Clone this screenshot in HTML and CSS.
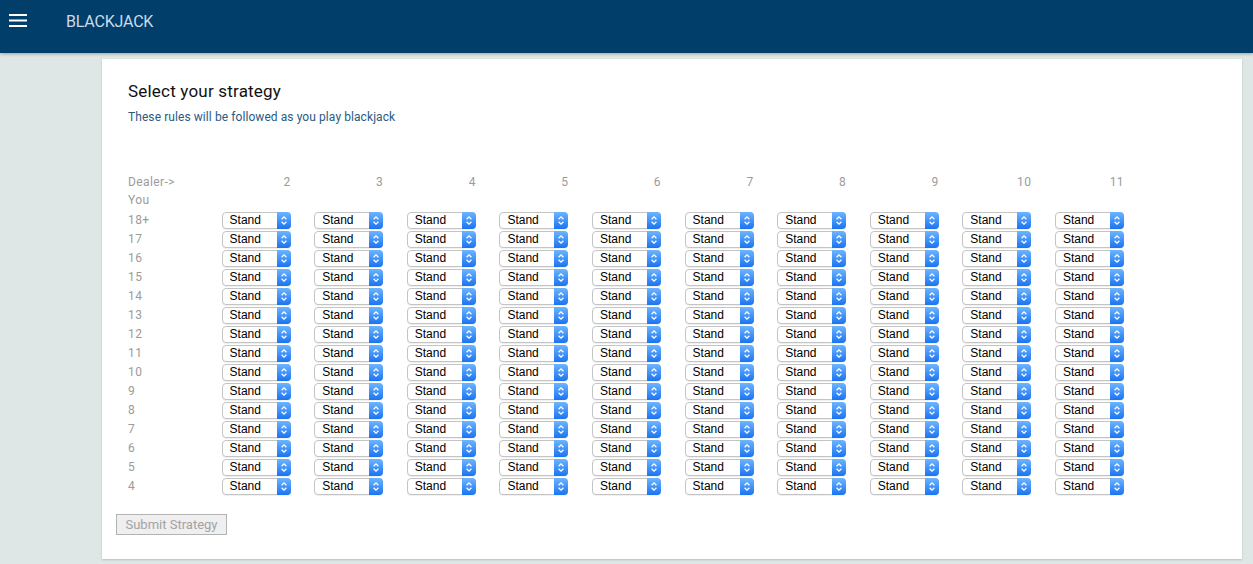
FILE: index.html
```html
<!DOCTYPE html>
<html lang="en">
<head>
<meta charset="utf-8">
<title>Blackjack</title>
<link rel="stylesheet" href="styles.css">
</head>
<body>
<header class="topbar">
  <button class="menu" aria-label="Menu">
    <svg width="18" height="14" viewBox="0 0 18 14"><rect x="0" y="0" width="18" height="2" fill="#fff"/><rect x="0" y="5.5" width="18" height="2" fill="#fff"/><rect x="0" y="11" width="18" height="2" fill="#fff"/></svg>
  </button>
  <span class="brand">BLACKJACK</span>
</header>
<main class="page">
  <section class="card">
    <h1 class="title">Select your strategy</h1>
    <p class="subtitle">These rules will be followed as you play blackjack</p>
    <div class="grid" id="grid">
      <div class="lbl">Dealer-&gt;</div>
    </div>
    <button class="submit" disabled>Submit Strategy</button>
  </section>
</main>
<script src="script.js"></script>
</body>
</html>
```

FILE: script.js
```js
(function () {
  var grid = document.getElementById('grid');
  var dealer = [2, 3, 4, 5, 6, 7, 8, 9, 10, 11];
  var html = '';
  dealer.forEach(function (d) { html += '<div class="num">' + d + '</div>'; });
  html += '<div class="lbl you">You</div>';
  var rows = ['18+', '17', '16', '15', '14', '13', '12', '11', '10', '9', '8', '7', '6', '5', '4'];
  var arrow = '<span class="arr"><svg width="14" height="17" viewBox="0 0 14 17"><path d="M4.6 7.2 L7 4.8 L9.4 7.2" fill="none" stroke="#fff" stroke-width="1.3"/><path d="M4.6 9.8 L7 12.2 L9.4 9.8" fill="none" stroke="#fff" stroke-width="1.3"/></svg></span>';
  rows.forEach(function (r) {
    html += '<div class="lbl row">' + r + '</div>';
    dealer.forEach(function () {
      html += '<div class="cell"><span class="sel"><select><option>Stand</option><option>Hit</option><option>Double</option></select>' + arrow + '</span></div>';
    });
  });
  grid.insertAdjacentHTML('beforeend', html);
})();
```

FILE: styles.css
```css
html, body {
  margin: 0;
  padding: 0;
}
body {
  background: #dfe6e6;
  font-family: Roboto, "Liberation Sans", sans-serif;
  height: 564px;
  overflow: hidden;
}
.topbar {
  height: 53px;
  background: #013e6a;
  display: flex;
  align-items: center;
  box-shadow: 0 1px 3px rgba(0, 0, 0, 0.3);
  position: relative;
  z-index: 1;
}
.menu {
  border: 0;
  background: none;
  padding: 0;
  margin: 0 0 11px 9px;
  width: 18px;
  height: 14px;
  display: flex;
}
.brand {
  margin: 0 0 11px 39px;
  color: #cbdbea;
  font-size: 16px;
  letter-spacing: -0.2px;
}
.page {
  padding: 6px 11px 0 102px;
}
.card {
  background: #fff;
  height: 500px;
  box-sizing: border-box;
  padding: 22px 14px 0 14px;
  box-shadow: 0 1px 2px rgba(0, 0, 0, 0.18);
}
.title {
  margin: 0 0 0 12px;
  font-size: 17px;
  line-height: 20px;
  font-weight: 400;
  color: #111;
  letter-spacing: 0.2px;
}
.subtitle {
  margin: 8px 0 0 12px;
  font-size: 12px;
  line-height: 16px;
  color: #2b5b82;
  letter-spacing: 0.08px;
}
.grid {
  margin: 48px 0 0 12px;
  display: grid;
  grid-template-columns: 70px repeat(10, 92.6px);
  grid-auto-rows: 19px;
  grid-template-rows: 18px 20px;
  font-size: 12px;
  color: #9b9b9b;
}
.lbl, .num {
  line-height: 18px;
  white-space: nowrap;
  letter-spacing: 0.4px;
}
.num {
  text-align: right;
  padding-right: 0;
}
.you {
  grid-column: 1 / -1;
}
.row {
  line-height: 19px;
}
.cell {
  display: flex;
  justify-content: flex-end;
  align-items: center;
}
.sel {
  position: relative;
  display: block;
  width: 69px;
  height: 17px;
}
.sel select {
  -webkit-appearance: none;
  appearance: none;
  display: block;
  width: 69px;
  height: 17px;
  box-sizing: border-box;
  border: 1px solid #c4c4c4;
  border-radius: 4px;
  background: #fff;
  padding: 0 0 0 7px;
  margin: 0;
  font-family: "Liberation Sans", Arial, sans-serif;
  font-size: 12px;
  line-height: 15px;
  color: #000;
  box-shadow: 0 1px 0 rgba(0, 0, 0, 0.06);
}
.arr {
  position: absolute;
  right: 0;
  top: 0;
  width: 14px;
  height: 17px;
  border-radius: 0 4px 4px 0;
  background: linear-gradient(#6db5ff, #1a74f2);
  pointer-events: none;
  display: flex;
}
.submit {
  margin-top: 18px;
  width: 111px;
  height: 21px;
  padding: 0;
  border: 1px solid #b3b3b3;
  background: #efefef;
  color: #a3a3a3;
  font-family: Roboto, "Liberation Sans", sans-serif;
  font-size: 13px;
  border-radius: 0;
  display: block;
}
```
